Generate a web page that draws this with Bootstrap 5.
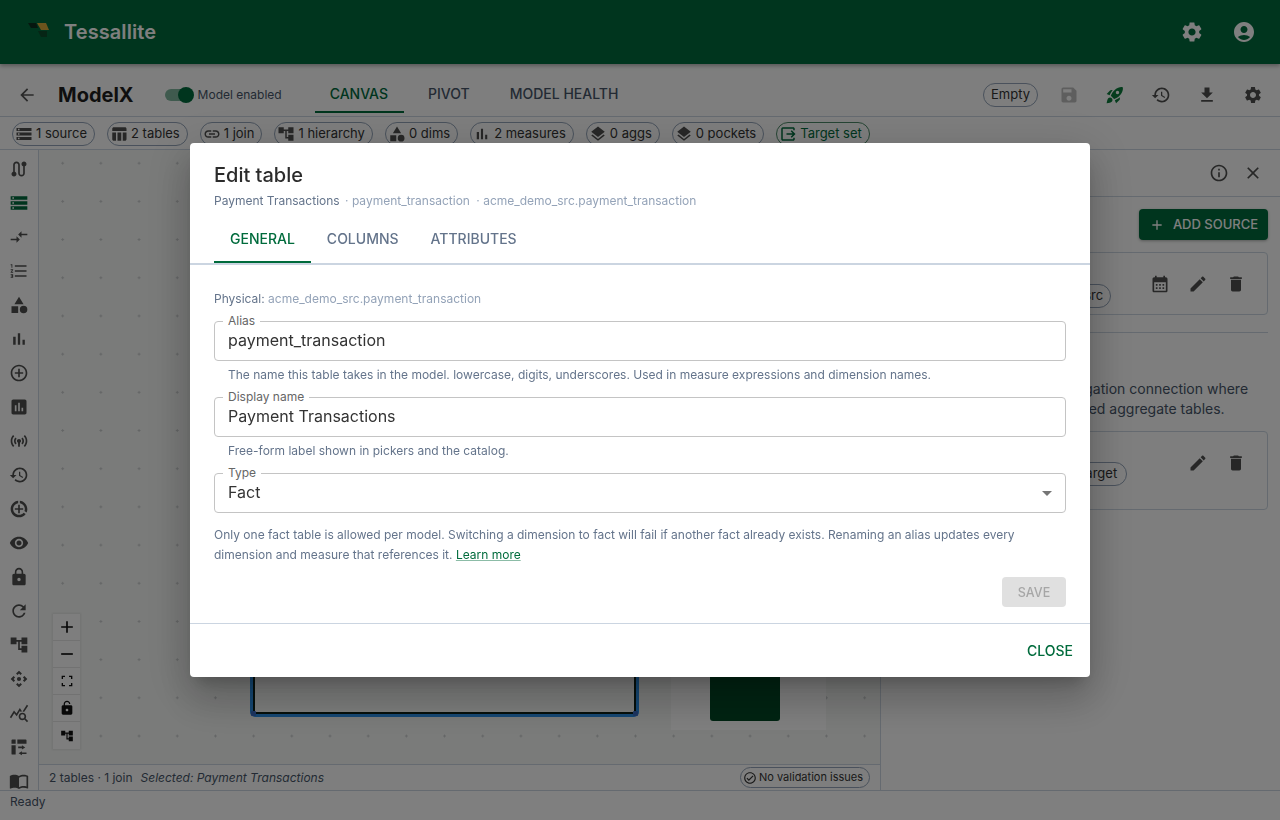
<!DOCTYPE html>
<html lang="en">
<head>
  <meta charset="UTF-8" />
  <meta name="viewport" content="width=device-width, initial-scale=1.0"/>
  <title>Tessallite - ModelX</title>
  <link href="https://cdn.jsdelivr.net/npm/bootstrap@5.3.3/dist/css/bootstrap.min.css" rel="stylesheet"/>
  <style>
    html, body { height: 820px; overflow: hidden; }
    body { font-family: Inter, "Liberation Sans", sans-serif; font-size: 14px; color: #1f2933; background: #fbfcfb; }
    .ico { width: 20px; height: 20px; fill: currentColor; flex: none; display: block; }
    .ico-14 { width: 14px; height: 14px; }
    .ico-16 { width: 16px; height: 16px; }
    .ico-18 { width: 18px; height: 18px; }
    .ico-24 { width: 24px; height: 24px; }

    .appbar { height: 64px; background: #006b3c; color: #fff; padding: 0 24px 0 28px; box-shadow: 0 2px 4px rgba(0,0,0,.3); position: relative; z-index: 2; }
    .brand-logo { margin-bottom: 4px; }
    .brand-name { font-size: 20px; font-weight: 600; margin-left: 14px; letter-spacing: .08px; }
    .appbar-btns { gap: 28px; color: #fff; }

    .toolbar { height: 53px; padding: 10px 17px 0 17px; border-bottom: 1px solid #cbd5e1; background: #fcfdfc; }
    .back-ico { color: #555; }
    .model-name { font-size: 20px; font-weight: 700; margin-left: 21px; color: #1e1e1e; }
    .switch-track { width: 28px; height: 12px; border-radius: 6px; background: #7fb59d; display: block; position: relative; margin-left: 31px; }
    .switch-knob { width: 16px; height: 16px; border-radius: 50%; background: #006b3c; position: absolute; right: -1px; top: -2px; }
    .switch-label { font-size: 12px; color: #475569; margin-left: 5px; margin-right: 33px; }
    .top-tabs { gap: 8px; align-self: stretch; margin-top: -10px; padding-top: 10px; }
    .top-tab { padding: 0 16px; font-weight: 500; font-size: 14px; color: #475569; display: flex; align-items: center; border-bottom: 2px solid transparent; margin-bottom: 3px; padding-top: 2px; }
    .top-tab.is-on { color: #006b3c; border-bottom-color: #006b3c; padding-left: 15px; padding-right: 16px; }
    .status-pill { border: 1px solid #94a3b8; border-radius: 12px; height: 24px; padding: 0 7px; font-size: 13px; display: flex; align-items: center; color: #333; }
    .tool-btns { gap: 26px; margin-left: 21px; color: #475569; }
    .tool-btns .ico { color: #4f4f4f; }
    .tool-btns .is-off { color: #bdbdbd; }
    .tool-btns .is-go { color: #0b7a3b; }

    .chips-row { height: 33px; padding: 1px 12px 0; gap: 12px; border-bottom: 1px solid #cbd5e1; background: #fcfdfc; }
    .stat-chip { height: 24px; border: 1px solid #94a3b8; border-radius: 12px; padding: 0 7px 0 2px; display: flex; align-items: center; gap: 3px; font-size: 13px; color: #333; white-space: nowrap; }
    .stat-chip .ico { color: #4f4f4f; }
    .stat-chip.is-target { border-color: #4d8a68; color: #006b3c; }
    .stat-chip.is-target .ico { color: #006b3c; }

    .workspace { height: 640px; min-height: 0; }
    .rail { width: 39px; border-right: 1px solid #cbd5e1; padding-top: 9px; gap: 14px; overflow: hidden; color: #4f4f4f; background: #fcfdfc; }
    .rail .is-on { color: #006b3c; }
    .canvas-col { width: 841px; }
    .flow-canvas { position: relative; height: 614px; background-color: #f5f7f5; background-image: radial-gradient(circle, #c9cccd 1px, transparent 1.3px); background-size: 38.2px 38.2px; background-position: 4.6px -5.9px; overflow: hidden; }
    .node-table { position: absolute; left: 214px; top: 300px; width: 383px; height: 264px; background: #fbfcfb; border: 2px solid #0b1f17; outline: 3px solid #2a90e8; border-radius: 2px; }
    .node-handle { position: absolute; width: 5px; height: 5px; background: #3a6cc4; border-radius: 1px; bottom: -4px; }
    .node-handle.at-left { left: -4px; }
    .node-handle.at-right { right: -4px; }
    .node-shell { position: absolute; left: 632px; top: 300px; width: 155px; height: 280px; background: #fefefe; }
    .node-fact { position: absolute; left: 671px; top: 300px; width: 70px; height: 271px; background: #004825; border-radius: 0 0 3px 3px; }
    .zoom-tools { position: absolute; left: 14px; top: 464px; width: 27px; background: #fdfdfd; box-shadow: 0 0 2px 1px rgba(0,0,0,.08); }
    .zoom-tools div { height: 27px; display: flex; align-items: center; justify-content: center; border-bottom: 1px solid #e4e4e4; color: #111; }
    .zoom-tools div:last-child { border-bottom: 0; }
    .canvas-foot { height: 26px; border-top: 1px solid #cbd5e1; padding: 0 10px; font-size: 12px; color: #475569; background: #fcfdfc; }
    .canvas-foot em { margin-left: 8px; }
    .check-chip { height: 21px; border: 1px solid #94a3b8; border-radius: 11px; padding: 0 6px 0 2px; font-size: 11px; color: #333; display: flex; align-items: center; gap: 2px; }

    .side-panel { width: 400px; border-left: 1px solid #cbd5e1; background: #fcfdfc; }
    .side-head { height: 47px; border-bottom: 1px solid #cbd5e1; padding-right: 17px; gap: 14px; color: #4f4f4f; }
    .side-body { padding: 12px 12px 0 15px; }
    .add-btn { width: 129px; height: 31px; background: #006b3c; color: #fff; font-size: 13px; font-weight: 500; border: 0; border-radius: 4px; padding: 1px 0 0; box-shadow: 0 1px 3px rgba(0,0,0,.3); }
    .add-btn:hover { background: #006b3c; color: #fff; }
    .src-card { border: 1px solid #cbd5e1; border-radius: 4px; padding: 11px 21px 0 13px; background: #fcfdfc; margin-top: 12px; height: 63px; }
    .src-card.tall { height: 79px; margin-top: 12px; }
    .src-card.tall .src-name { height: 19px; }
    .src-card.tall .src-chip { padding: 0 8.5px; }
    .src-chip { border: 1px solid #94a3b8; border-radius: 12px; height: 24px; padding: 0 7px; font-size: 13px; color: #333; display: inline-flex; align-items: center; }
    .src-name { font-size: 14px; font-weight: 500; height: 20px; }
    .card-acts { gap: 18px; color: #4f4f4f; margin-left: auto; margin-top: 10px; height: 20px; }
    .side-rule { border-top: 1px solid #cbd5e1; margin: 17px 0 0; }
    .side-note { margin-top: 46px; font-size: 14px; line-height: 20px; color: #475569; margin-bottom: 0; white-space: nowrap; }

    .status-strip { height: 30px; border-top: 1px solid #cbd5e1; padding: 0 10px 8px; font-size: 12px; color: #475569; background: #fff; }

    .edit-dialog { max-width: 900px; width: 900px; margin: 0 auto; min-height: 820px; }
    .edit-card { border: 0; border-radius: 4px; box-shadow: 0 11px 15px -7px rgba(0,0,0,.2), 0 24px 38px 3px rgba(0,0,0,.14), 0 9px 46px 8px rgba(0,0,0,.12); }
    .edit-head { padding: 20px 24px 0; }
    .edit-title { font-size: 20px; font-weight: 500; line-height: 24px; color: #2b2b2b; margin: 0; }
    .edit-sub { font-size: 12px; line-height: 18px; margin-top: 5px; color: #64748b; }
    .edit-sub span { color: #94a3b8; margin-left: 2px; }
    .edit-sub span + span { margin-left: 3px; }
    .dialog-tabs { margin-top: 5px; padding: 0 24px; border-bottom: 2px solid #cbd5e1; height: 50px; }
    .dialog-tabs .nav-link { padding: 0 16px; height: 48px; line-height: 47px; color: #64748b; font-size: 14px; font-weight: 500; border-radius: 0; }
    .dialog-tabs .nav-link.active { color: #006b3c; box-shadow: inset 0 -2px 0 #006b3c; }
    .edit-body { padding: 25px 24px 16px; }
    .physical { font-size: 12px; line-height: 18px; color: #64748b; margin-bottom: 13px; }
    .physical span { color: #94a3b8; }
    .out-field { position: relative; }
    .out-field label { position: absolute; left: 9px; top: -8px; padding: 0 5px; background: #fff; font-size: 12px; line-height: 15px; color: #666; }
    .out-field .form-control, .out-field .form-select { height: 40px; padding: 0 13px 2px; font-size: 16px; color: #333; border-color: #c4c4c4; border-radius: 4px; background-image: none; box-shadow: none; font-family: inherit; }
    .select-caret { position: absolute; right: 7px; top: 8px; width: 24px; height: 24px; fill: #757575; pointer-events: none; }
    .field-help { font-size: 12px; line-height: 18px; color: #64748b; padding-left: 14px; margin: 5px 0 13px; }
    .edit-note { font-size: 12px; line-height: 20px; color: #64748b; margin: 12px 0 0; }
    .edit-note a { color: #006b3c; text-decoration-color: rgba(0,107,60,.45); }
    .save-btn { width: 64px; height: 30px; padding: 2px 0 0; background: #e0e0e0; color: #a6a6a6; border: 0; font-size: 12.5px; font-weight: 500; border-radius: 4px; opacity: 1; margin-top: 12px; }
    .btn.save-btn:disabled { background: #e0e0e0; color: #a6a6a6; opacity: 1; }
    .edit-foot { height: 54px; border-top: 1px solid #cbd5e1; padding: 0 17px 0 0; }
    .close-btn { color: #006b3c; font-size: 14px; font-weight: 500; padding: 0; border: 0; }
    .close-btn:hover { color: #006b3c; }
  </style>
</head>
<body>
  <svg class="d-none" xmlns="http://www.w3.org/2000/svg">
    <symbol id="i-gear" viewBox="0 0 24 24"><path d="M19.14 12.94c.04-.3.06-.61.06-.94 0-.32-.02-.64-.07-.94l2.03-1.58c.18-.14.23-.41.12-.61l-1.92-3.32c-.12-.22-.37-.29-.59-.22l-2.39.96c-.5-.38-1.03-.7-1.62-.94l-.36-2.54c-.04-.24-.24-.41-.48-.41h-3.84c-.24 0-.43.17-.47.41l-.36 2.54c-.59.24-1.13.57-1.62.94l-2.39-.96c-.22-.08-.47 0-.59.22L2.74 8.87c-.12.21-.08.47.12.61l2.03 1.58c-.05.3-.09.63-.09.94s.02.64.07.94l-2.03 1.58c-.18.14-.23.41-.12.61l1.92 3.32c.12.22.37.29.59.22l2.39-.96c.5.38 1.03.7 1.62.94l.36 2.54c.05.24.24.41.48.41h3.84c.24 0 .44-.17.47-.41l.36-2.54c.59-.24 1.13-.56 1.62-.94l2.39.96c.22.08.47 0 .59-.22l1.92-3.32c.12-.22.07-.47-.12-.61l-2.01-1.58zM12 15.6c-1.98 0-3.6-1.62-3.6-3.6s1.62-3.6 3.6-3.6 3.6 1.62 3.6 3.6-1.62 3.6-3.6 3.6z"/></symbol>
    <symbol id="i-user" viewBox="0 0 24 24"><path d="M12 2C6.48 2 2 6.48 2 12s4.48 10 10 10 10-4.48 10-10S17.52 2 12 2zm0 4c1.93 0 3.5 1.57 3.5 3.5S13.93 13 12 13s-3.5-1.57-3.5-3.5S10.07 6 12 6zm0 14c-2.03 0-4.43-.82-6.14-2.88C7.55 15.8 9.68 15 12 15s4.45.8 6.14 2.12C16.43 19.18 14.03 20 12 20z"/></symbol>
    <symbol id="i-back" viewBox="0 0 24 24"><path d="M20 11H7.83l5.59-5.59L12 4l-8 8 8 8 1.41-1.41L7.83 13H20v-2z"/></symbol>
    <symbol id="i-save" viewBox="0 0 24 24"><path d="M17 3H5c-1.11 0-2 .9-2 2v14c0 1.1.89 2 2 2h14c1.1 0 2-.9 2-2V7l-4-4zm-5 16c-1.66 0-3-1.34-3-3s1.34-3 3-3 3 1.34 3 3-1.34 3-3 3zm3-10H5V5h10v4z"/></symbol>
    <symbol id="i-rocket" viewBox="0 0 24 24"><path d="M9.19 6.35c-2.04 2.29-3.44 5.58-3.57 5.89L2 10.69l4.05-4.05c.47-.47 1.15-.68 1.81-.55l1.33.26zM11.17 17s3.74-1.55 5.89-3.7c5.4-5.4 4.5-9.62 4.21-10.57-.95-.3-5.17-1.19-10.57 4.21C8.55 9.09 7 12.83 7 12.83L11.17 17zm6.48-2.19c-2.29 2.04-5.58 3.44-5.89 3.57L13.31 22l4.05-4.05c.47-.47.68-1.15.55-1.81l-.26-1.33zM9 18c0 .83-.34 1.58-.88 2.12C6.94 21.3 2 22 2 22s.7-4.94 1.88-6.12C4.42 15.34 5.17 15 6 15c1.66 0 3 1.34 3 3zm4-9c0-1.1.9-2 2-2s2 .9 2 2-.9 2-2 2-2-.9-2-2z"/></symbol>
    <symbol id="i-history" viewBox="0 0 24 24"><path d="M13 3c-4.97 0-9 4.03-9 9H1l3.89 3.89.07.14L9 12H6c0-3.87 3.13-7 7-7s7 3.13 7 7-3.13 7-7 7c-1.93 0-3.68-.79-4.94-2.06l-1.42 1.42C8.27 19.99 10.51 21 13 21c4.97 0 9-4.03 9-9s-4.03-9-9-9zm-1 5v5l4.28 2.54.72-1.21-3.5-2.08V8H12z"/></symbol>
    <symbol id="i-download" viewBox="0 0 24 24"><path d="M19 9h-4V3H9v6H5l7 7 7-7zM5 18v2h14v-2H5z"/></symbol>
    <symbol id="i-storage" viewBox="0 0 24 24"><path d="M2 20h20v-4H2v4zm2-3h2v2H4v-2zM2 4v4h20V4H2zm4 3H4V5h2v2zm-4 7h20v-4H2v4zm2-3h2v2H4v-2z"/></symbol>
    <symbol id="i-table" viewBox="0 0 24 24"><path d="M10 10.02h5V21h-5zM17 21h3c1.1 0 2-.9 2-2v-9h-5v11zm3-18H5c-1.1 0-2 .9-2 2v3h19V5c0-1.1-.9-2-2-2zM3 19c0 1.1.9 2 2 2h3V10H3v9z"/></symbol>
    <symbol id="i-link" viewBox="0 0 24 24"><path d="M3.9 12c0-1.71 1.39-3.1 3.1-3.1h4V7H7c-2.76 0-5 2.24-5 5s2.24 5 5 5h4v-1.9H7c-1.71 0-3.1-1.39-3.1-3.1zM8 13h8v-2H8v2zm9-6h-4v1.9h4c1.71 0 3.1 1.39 3.1 3.1s-1.39 3.1-3.1 3.1h-4V17h4c2.76 0 5-2.24 5-5s-2.24-5-5-5z"/></symbol>
    <symbol id="i-tree" viewBox="0 0 24 24"><path d="M22 11V3h-7v3H9V3H2v8h7V8h2v10h4v3h7v-8h-7v3h-2V8h2v3z"/></symbol>
    <symbol id="i-shapes" viewBox="0 0 24 24"><path d="M12 2l-5.5 9h11zM3 13.5h8v8H3zM17.5 13a4.5 4.5 0 1 0 0 9 4.5 4.5 0 0 0 0-9z"/></symbol>
    <symbol id="i-bars" viewBox="0 0 24 24"><path d="M5 9.2h3V19H5zM10.6 5h2.8v14h-2.8zm5.6 8H19v6h-2.8z"/></symbol>
    <symbol id="i-layers" viewBox="0 0 24 24"><path d="M11.99 18.54l-7.37-5.73L3 14.07l9 7 9-7-1.63-1.27-7.38 5.74zM12 16l7.36-5.73L21 9l-9-7-9 7 1.63 1.27L12 16z"/></symbol>
    <symbol id="i-output" viewBox="0 0 24 24"><path d="M17 17l5-5-5-5-1.4 1.4 2.6 2.6H10v2h8.2l-2.6 2.6zM19 19H5V5h14v2h2V5c0-1.1-.9-2-2-2H5a2 2 0 0 0-2 2v14c0 1.1.9 2 2 2h14c1.1 0 2-.9 2-2v-2h-2z"/></symbol>
    <symbol id="i-route" viewBox="0 0 24 24"><path transform="matrix(-1 0 0 1 24 0)" d="M19 15.18V7c0-2.21-1.79-4-4-4s-4 1.79-4 4v10c0 1.1-.9 2-2 2s-2-.9-2-2V8.82C8.16 8.4 9 7.3 9 6c0-1.66-1.34-3-3-3S3 4.34 3 6c0 1.3.84 2.4 2 2.82V17c0 2.21 1.79 4 4 4s4-1.79 4-4V7c0-1.1.9-2 2-2s2 .9 2 2v8.18c-1.16.41-2 1.51-2 2.82 0 1.66 1.34 3 3 3s3-1.34 3-3c0-1.3-.84-2.4-2-2.82z"/></symbol>
    <symbol id="i-compare" viewBox="0 0 24 24"><path d="M9.01 14H2v2h7.01v3L13 15l-3.99-4v3zm5.98-1v-3H22V8h-7.01V5L11 9l3.99 4z"/></symbol>
    <symbol id="i-numbered" viewBox="0 0 24 24"><path d="M2 17h2v.5H3v1h1v.5H2v1h3v-4H2v1zm1-9h1V4H2v1h1v3zm-1 3h1.8L2 13.1v.9h3v-1H3.2L5 10.9V10H2v1zm5-6v2h14V5H7zm0 14h14v-2H7v2zm0-6h14v-2H7v2z"/></symbol>
    <symbol id="i-addc" viewBox="0 0 24 24"><path d="M13 7h-2v4H7v2h4v4h2v-4h4v-2h-4V7zm-1-5C6.48 2 2 6.48 2 12s4.48 10 10 10 10-4.48 10-10S17.52 2 12 2zm0 18c-4.41 0-8-3.59-8-8s3.59-8 8-8 8 3.59 8 8-3.59 8-8 8z"/></symbol>
    <symbol id="i-assess" viewBox="0 0 24 24"><path d="M19 3H5c-1.1 0-2 .9-2 2v14c0 1.1.9 2 2 2h14c1.1 0 2-.9 2-2V5c0-1.1-.9-2-2-2zM9 17H7v-7h2v7zm4 0h-2V7h2v10zm4 0h-2v-4h2v4z"/></symbol>
    <symbol id="i-antenna" viewBox="0 0 24 24"><path d="M7.76 16.24C6.67 15.16 6 13.66 6 12s.67-3.16 1.76-4.24l1.42 1.42C8.45 9.9 8 10.9 8 12c0 1.1.45 2.1 1.17 2.83l-1.41 1.41zm8.48 0C17.33 15.16 18 13.66 18 12s-.67-3.16-1.76-4.24l-1.42 1.42C15.55 9.9 16 10.9 16 12c0 1.1-.45 2.1-1.17 2.83l1.41 1.41zM12 9.5c-1.4 0-2.5 1.1-2.5 2.5 0 .9.5 1.7 1.3 2.2l.2 4.8h2l.2-4.8c.8-.5 1.3-1.3 1.3-2.2 0-1.4-1.1-2.5-2.5-2.5zm8 2.5c0 2.21-.9 4.21-2.35 5.65l1.42 1.42C20.88 17.26 22 14.76 22 12s-1.12-5.26-2.93-7.07l-1.42 1.42C19.1 7.79 20 9.79 20 12zM6.35 6.35L4.93 4.93C3.12 6.74 2 9.24 2 12s1.12 5.26 2.93 7.07l1.42-1.42C4.9 16.21 4 14.21 4 12s.9-4.21 2.35-5.65z"/></symbol>
    <symbol id="i-saver" viewBox="0 0 24 24"><path d="M11 17h2v-4h4v-2h-4V7h-2v4H7v2h4v4zM13 2.05v3.03c3.39.49 6 3.39 6 6.92 0 .9-.18 1.75-.48 2.54l2.6 1.53C21.68 15.21 22 13.64 22 12c0-5.18-3.95-9.45-9-9.95zM12 19c-3.87 0-7-3.13-7-7 0-3.53 2.61-6.43 6-6.92V2.05C5.94 2.55 2 6.81 2 12c0 5.52 4.47 10 9.99 10 3.31 0 6.24-1.61 8.06-4.09l-2.6-1.53C16.17 18.02 14.21 19 12 19z"/></symbol>
    <symbol id="i-eye" viewBox="0 0 24 24"><path d="M12 4.5C7 4.5 2.73 7.61 1 12c1.73 4.39 6 7.5 11 7.5s9.27-3.11 11-7.5c-1.73-4.39-6-7.5-11-7.5zM12 17c-2.76 0-5-2.24-5-5s2.24-5 5-5 5 2.24 5 5-2.24 5-5 5zm0-8c-1.66 0-3 1.34-3 3s1.34 3 3 3 3-1.34 3-3-1.34-3-3-3z"/></symbol>
    <symbol id="i-lock" viewBox="0 0 24 24"><path d="M18 8h-1V6c0-2.76-2.24-5-5-5S7 3.24 7 6v2H6c-1.1 0-2 .9-2 2v10c0 1.1.9 2 2 2h12c1.1 0 2-.9 2-2V10c0-1.1-.9-2-2-2zm-6 9c-1.1 0-2-.9-2-2s.9-2 2-2 2 .9 2 2-.9 2-2 2zm3.1-9H8.9V6c0-1.71 1.39-3.1 3.1-3.1 1.71 0 3.1 1.39 3.1 3.1v2z"/></symbol>
    <symbol id="i-unlock" viewBox="0 0 24 24"><path d="M18 8H8.9V6c0-1.71 1.39-3.1 3.1-3.1s3.1 1.39 3.1 3.1H17c0-2.76-2.24-5-5-5S7 3.24 7 6v2H6c-1.1 0-2 .9-2 2v10c0 1.1.9 2 2 2h12c1.1 0 2-.9 2-2V10c0-1.1-.9-2-2-2zm-6 9c-1.1 0-2-.9-2-2s.9-2 2-2 2 .9 2 2-.9 2-2 2z"/></symbol>
    <symbol id="i-refresh" viewBox="0 0 24 24"><path d="M17.65 6.35C16.2 4.9 14.21 4 12 4c-4.42 0-7.99 3.58-7.99 8s3.57 8 7.99 8c3.73 0 6.84-2.55 7.73-6h-2.08c-.82 2.33-3.04 4-5.65 4-3.31 0-6-2.69-6-6s2.69-6 6-6c1.66 0 3.14.69 4.22 1.78L13 11h7V4l-2.35 2.35z"/></symbol>
    <symbol id="i-camera" viewBox="0 0 24 24"><path d="M15.54 5.54L13.77 7.3 12 5.54 10.23 7.3 8.46 5.54 12 2zm2.92 10l-1.76-1.77L18.46 12l-1.76-1.77 1.76-1.77L22 12zm-10 2.92l1.77-1.76L12 18.46l1.77-1.76 1.77 1.76L12 22zm-2.92-10l1.76 1.77L5.54 12l1.76 1.77-1.76 1.77L2 12zM12 9.5a2.5 2.5 0 1 0 0 5 2.5 2.5 0 0 0 0-5z"/></symbol>
    <symbol id="i-query" viewBox="0 0 24 24"><path d="M19.88 18.47c.44-.7.7-1.51.7-2.39 0-2.49-2.01-4.5-4.5-4.5s-4.5 2.01-4.5 4.5 2.01 4.5 4.49 4.5c.88 0 1.7-.26 2.39-.7L21.58 23 23 21.58l-3.12-3.11zm-3.8.11c-1.38 0-2.5-1.12-2.5-2.5s1.12-2.5 2.5-2.5 2.5 1.12 2.5 2.5-1.12 2.5-2.5 2.5zm-.36-8.5c-.74.02-1.45.18-2.1.45l-.55-.83-3.8 6.18-3.01-3.52-3.63 5.81L1 17l5-8 3 3.5L13 6l2.72 4.08zm2.59.5c-.64-.28-1.33-.45-2.05-.49L21.38 2 23 3.18l-4.69 7.4z"/></symbol>
    <symbol id="i-board" viewBox="0 0 24 24"><path d="M4 3h4v5H3V4a1 1 0 0 1 1-1zM10 3h10a1 1 0 0 1 1 1v4H10zM3 10h5v11H4a1 1 0 0 1-1-1zM15.5 10l4 2.5-4 2.5v-1.5H11V11.5h4.5zM15.5 22l-4-2.5 4-2.5v1.5H21v2h-5.5z"/></symbol>
    <symbol id="i-book" viewBox="0 0 24 24"><path d="M21 5c-1.11-.35-2.33-.5-3.5-.5-1.95 0-4.05.4-5.5 1.5-1.45-1.1-3.55-1.5-5.5-1.5S2.45 4.9 1 6v14.65c0 .25.25.5.5.5.1 0 .15-.05.25-.05C3.1 20.45 5.05 20 6.5 20c1.95 0 4.05.4 5.5 1.5 1.35-.85 3.8-1.5 5.5-1.5 1.65 0 3.35.3 4.75 1.05.1.05.15.05.25.05.25 0 .5-.25.5-.5V6c-.6-.45-1.25-.75-2-1zm0 13.5c-1.1-.35-2.3-.5-3.5-.5-1.7 0-4.15.65-5.5 1.5V8c1.35-.85 3.8-1.5 5.5-1.5 1.2 0 2.4.15 3.5.5v11.5z"/></symbol>
    <symbol id="i-fit" viewBox="0 0 24 24"><path d="M4 4h5v2H6v3H4zM15 4h5v5h-2V6h-3zM4 15h2v3h3v2H4zM18 15h2v5h-5v-2h3z"/></symbol>
    <symbol id="i-plus" viewBox="0 0 24 24"><path d="M19 13h-6v6h-2v-6H5v-2h6V5h2v6h6v2z"/></symbol>
    <symbol id="i-minus" viewBox="0 0 24 24"><path d="M19 13H5v-2h14v2z"/></symbol>
    <symbol id="i-info" viewBox="0 0 24 24"><path d="M11 7h2v2h-2zm0 4h2v6h-2zm1-9C6.48 2 2 6.48 2 12s4.48 10 10 10 10-4.48 10-10S17.52 2 12 2zm0 18c-4.41 0-8-3.59-8-8s3.59-8 8-8 8 3.59 8 8-3.59 8-8 8z"/></symbol>
    <symbol id="i-close" viewBox="0 0 24 24"><path d="M19 6.41L17.59 5 12 10.59 6.41 5 5 6.41 10.59 12 5 17.59 6.41 19 12 13.41 17.59 19 19 17.59 13.41 12z"/></symbol>
    <symbol id="i-calendar" viewBox="0 0 24 24"><path d="M19 4h-1V2h-2v2H8V2H6v2H5c-1.1 0-2 .9-2 2v14c0 1.1.9 2 2 2h14c1.1 0 2-.9 2-2V6c0-1.1-.9-2-2-2zm0 16H5V10h14v10zM9 14H7v-2h2v2zm4 0h-2v-2h2v2zm4 0h-2v-2h2v2zm-8 4H7v-2h2v2zm4 0h-2v-2h2v2zm4 0h-2v-2h2v2z"/></symbol>
    <symbol id="i-edit" viewBox="0 0 24 24"><path d="M3 17.25V21h3.75L17.81 9.94l-3.75-3.75L3 17.25zM20.71 7.04c.39-.39.39-1.02 0-1.41l-2.34-2.34c-.39-.39-1.02-.39-1.41 0l-1.83 1.83 3.75 3.75 1.83-1.83z"/></symbol>
    <symbol id="i-trash" viewBox="0 0 24 24"><path d="M6 19c0 1.1.9 2 2 2h8c1.1 0 2-.9 2-2V7H6v12zM19 4h-3.5l-1-1h-5l-1 1H5v2h14V4z"/></symbol>
    <symbol id="i-check" viewBox="0 0 24 24"><path d="M12 2C6.48 2 2 6.48 2 12s4.48 10 10 10 10-4.48 10-10S17.52 2 12 2zm0 18c-4.41 0-8-3.59-8-8s3.59-8 8-8 8 3.59 8 8-3.59 8-8 8zm4.59-12.42L10 14.17l-2.59-2.58L6 13l4 4 8-8z"/></symbol>
    <symbol id="i-caret" viewBox="0 0 24 24"><path d="M7 10l5 5 5-5z"/></symbol>
  </svg>

  <header class="appbar d-flex align-items-center">
    <svg class="brand-logo" width="22" height="14" viewBox="0 0 22 14">
      <path d="M0 0h8l2 5H3z" fill="#0c2f1f"/>
      <path d="M9 0h9l3 7h-8z" fill="#d9a93a"/>
      <path d="M10 8h9v6h-6z" fill="#0c4a2b"/>
    </svg>
    <span class="brand-name">Tessallite</span>
    <div class="appbar-btns d-flex ms-auto">
      <svg class="ico ico-24"><use href="#i-gear"/></svg>
      <svg class="ico ico-24"><use href="#i-user"/></svg>
    </div>
  </header>

  <div class="toolbar d-flex align-items-center">
    <svg class="ico back-ico"><use href="#i-back"/></svg>
    <span class="model-name">ModelX</span>
    <span class="switch-track"><span class="switch-knob"></span></span>
    <span class="switch-label">Model enabled</span>
    <nav class="top-tabs d-flex">
      <span class="top-tab is-on">CANVAS</span>
      <span class="top-tab">PIVOT</span>
      <span class="top-tab">MODEL HEALTH</span>
    </nav>
    <span class="status-pill ms-auto">Empty</span>
    <div class="tool-btns d-flex">
      <svg class="ico is-off"><use href="#i-save"/></svg>
      <svg class="ico is-go"><use href="#i-rocket"/></svg>
      <svg class="ico"><use href="#i-history"/></svg>
      <svg class="ico"><use href="#i-download"/></svg>
      <svg class="ico"><use href="#i-gear"/></svg>
    </div>
  </div>

  <div class="chips-row d-flex align-items-center">
    <span class="stat-chip"><svg class="ico ico-18"><use href="#i-storage"/></svg>1 source</span>
    <span class="stat-chip"><svg class="ico ico-18"><use href="#i-table"/></svg>2 tables</span>
    <span class="stat-chip"><svg class="ico ico-18"><use href="#i-link"/></svg>1 join</span>
    <span class="stat-chip"><svg class="ico ico-18"><use href="#i-tree"/></svg>1 hierarchy</span>
    <span class="stat-chip"><svg class="ico ico-18"><use href="#i-shapes"/></svg>0 dims</span>
    <span class="stat-chip"><svg class="ico ico-18"><use href="#i-bars"/></svg>2 measures</span>
    <span class="stat-chip"><svg class="ico ico-18"><use href="#i-layers"/></svg>0 aggs</span>
    <span class="stat-chip"><svg class="ico ico-18"><use href="#i-layers"/></svg>0 pockets</span>
    <span class="stat-chip is-target"><svg class="ico ico-18"><use href="#i-output"/></svg>Target set</span>
  </div>

  <main class="workspace d-flex">
    <aside class="rail d-flex flex-column align-items-center">
      <svg class="ico"><use href="#i-route"/></svg>
      <svg class="ico is-on"><use href="#i-storage"/></svg>
      <svg class="ico"><use href="#i-compare"/></svg>
      <svg class="ico"><use href="#i-numbered"/></svg>
      <svg class="ico"><use href="#i-shapes"/></svg>
      <svg class="ico"><use href="#i-bars"/></svg>
      <svg class="ico"><use href="#i-addc"/></svg>
      <svg class="ico"><use href="#i-assess"/></svg>
      <svg class="ico"><use href="#i-antenna"/></svg>
      <svg class="ico"><use href="#i-history"/></svg>
      <svg class="ico"><use href="#i-saver"/></svg>
      <svg class="ico"><use href="#i-eye"/></svg>
      <svg class="ico"><use href="#i-lock"/></svg>
      <svg class="ico"><use href="#i-refresh"/></svg>
      <svg class="ico"><use href="#i-tree"/></svg>
      <svg class="ico"><use href="#i-camera"/></svg>
      <svg class="ico"><use href="#i-query"/></svg>
      <svg class="ico"><use href="#i-board"/></svg>
      <svg class="ico"><use href="#i-book"/></svg>
    </aside>

    <section class="canvas-col d-flex flex-column">
      <div class="flow-canvas">
        <div class="node-table">
          <span class="node-handle at-left"></span>
          <span class="node-handle at-right"></span>
        </div>
        <div class="node-shell"></div>
        <div class="node-fact"></div>
        <div class="zoom-tools">
          <div><svg class="ico"><use href="#i-plus"/></svg></div>
          <div><svg class="ico"><use href="#i-minus"/></svg></div>
          <div><svg class="ico ico-16"><use href="#i-fit"/></svg></div>
          <div><svg class="ico ico-16"><use href="#i-unlock"/></svg></div>
          <div><svg class="ico ico-14"><use href="#i-tree"/></svg></div>
        </div>
      </div>
      <div class="canvas-foot d-flex align-items-center">
        <span>2 tables · 1 join</span>
        <em>Selected: Payment Transactions</em>
        <span class="check-chip ms-auto"><svg class="ico ico-14"><use href="#i-check"/></svg>No validation issues</span>
      </div>
    </section>

    <aside class="side-panel d-flex flex-column">
      <div class="side-head d-flex align-items-center justify-content-end">
        <svg class="ico"><use href="#i-info"/></svg>
        <svg class="ico"><use href="#i-close"/></svg>
      </div>
      <div class="side-body">
        <div class="d-flex justify-content-end">
          <button class="btn add-btn d-flex align-items-center justify-content-center gap-2"><svg class="ico ico-16"><use href="#i-plus"/></svg>ADD SOURCE</button>
        </div>
        <div class="src-card d-flex">
          <div>
            <div class="src-name">Source</div>
            <span class="src-chip">Databricks</span> <span class="src-chip">acme_demo_src</span>
          </div>
          <div class="card-acts d-flex">
            <svg class="ico"><use href="#i-calendar"/></svg>
            <svg class="ico"><use href="#i-edit"/></svg>
            <svg class="ico"><use href="#i-trash"/></svg>
          </div>
        </div>
        <div class="side-rule"></div>
        <p class="side-note">Set the target with the aggregation connection where<br>Tessallite writes its materialized aggregate tables.</p>
        <div class="src-card tall d-flex">
          <div>
            <div class="src-name">Target</div>
            <span class="src-chip">acme_demo_warehouse_1 target</span>
          </div>
          <div class="card-acts d-flex">
            <svg class="ico"><use href="#i-edit"/></svg>
            <svg class="ico"><use href="#i-trash"/></svg>
          </div>
        </div>
      </div>
    </aside>
  </main>

  <footer class="status-strip d-flex align-items-center">Ready</footer>

  <div class="modal-backdrop show"></div>
  <div class="modal d-block" tabindex="-1">
    <div class="modal-dialog modal-dialog-centered edit-dialog">
      <div class="modal-content edit-card">
        <div class="edit-head">
          <h2 class="edit-title">Edit table</h2>
          <div class="edit-sub">Payment Transactions <span>· payment_transaction</span> <span>· acme_demo_src.payment_transaction</span></div>
        </div>
        <ul class="nav dialog-tabs">
          <li class="nav-item"><a class="nav-link active" href="#">GENERAL</a></li>
          <li class="nav-item"><a class="nav-link" href="#">COLUMNS</a></li>
          <li class="nav-item"><a class="nav-link" href="#">ATTRIBUTES</a></li>
        </ul>
        <div class="edit-body">
          <div class="physical">Physical: <span>acme_demo_src.payment_transaction</span></div>
          <div class="out-field">
            <label for="aliasInput">Alias</label>
            <input id="aliasInput" class="form-control" value="payment_transaction"/>
          </div>
          <div class="field-help">The name this table takes in the model. lowercase, digits, underscores. Used in measure expressions and dimension names.</div>
          <div class="out-field">
            <label for="displayInput">Display name</label>
            <input id="displayInput" class="form-control" value="Payment Transactions"/>
          </div>
          <div class="field-help">Free-form label shown in pickers and the catalog.</div>
          <div class="out-field">
            <label for="typeInput">Type</label>
            <select id="typeInput" class="form-select"><option>Fact</option><option>Dimension</option></select>
            <svg class="select-caret"><use href="#i-caret"/></svg>
          </div>
          <p class="edit-note">Only one fact table is allowed per model. Switching a dimension to fact will fail if another fact already exists. Renaming an alias updates every dimension and measure that references it. <a href="#">Learn more</a></p>
          <div class="d-flex justify-content-end">
            <button class="btn save-btn" disabled>SAVE</button>
          </div>
        </div>
        <div class="edit-foot d-flex align-items-center justify-content-end">
          <button class="btn close-btn">CLOSE</button>
        </div>
      </div>
    </div>
  </div>

  <script src="https://cdn.jsdelivr.net/npm/bootstrap@5.3.3/dist/js/bootstrap.bundle.min.js"></script>
</body>
</html>
